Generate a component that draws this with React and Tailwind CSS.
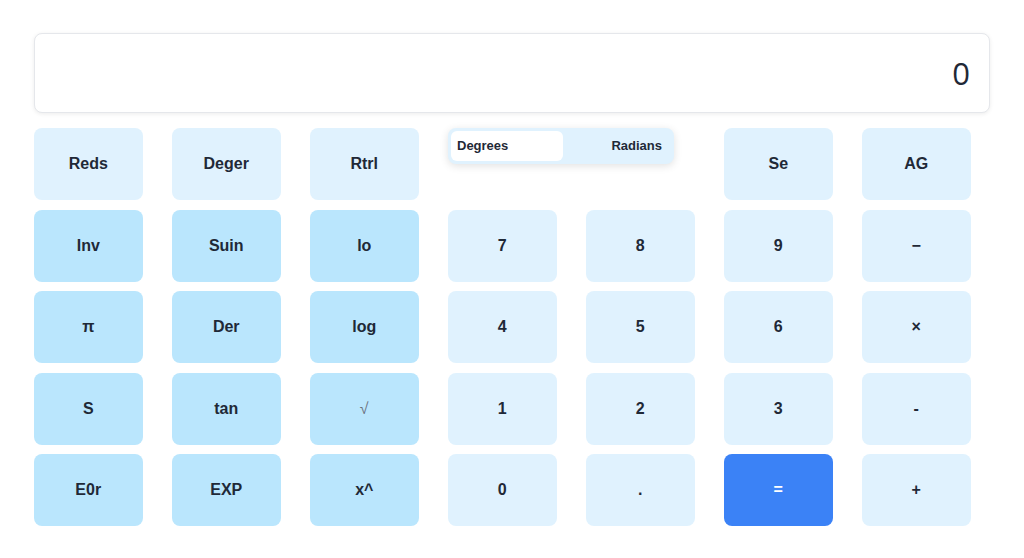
import React from "react";

const light = "bg-[#e0f2fe]";
const dark = "bg-[#bae6fd]";

const rows = [
  [
    { t: "Reds", c: light },
    { t: "Deger", c: light },
    { t: "Rtrl", c: light },
    { toggle: true },
    { t: "Se", c: light },
    { t: "AG", c: light },
  ],
  [
    { t: "Inv", c: dark },
    { t: "Suin", c: dark },
    { t: "lo", c: dark },
    { t: "7", c: light },
    { t: "8", c: light },
    { t: "9", c: light },
    { t: "−", c: light },
  ],
  [
    { t: "π", c: dark },
    { t: "Der", c: dark },
    { t: "log", c: dark },
    { t: "4", c: light },
    { t: "5", c: light },
    { t: "6", c: light },
    { t: "×", c: light },
  ],
  [
    { t: "S", c: dark },
    { t: "tan", c: dark },
    { t: "√", c: dark, thin: true },
    { t: "1", c: light },
    { t: "2", c: light },
    { t: "3", c: light },
    { t: "-", c: light },
  ],
  [
    { t: "E0r", c: dark },
    { t: "EXP", c: dark },
    { t: "x^", c: dark },
    { t: "0", c: light },
    { t: ".", c: light },
    { t: "=", c: "bg-[#3b82f6]", white: true },
    { t: "+", c: light },
  ],
];

function Toggle() {
  return (
    <div className="col-span-2 self-start">
      <div className="w-[226px] h-[36px] rounded-lg bg-[#e0f2fe] shadow-[0_2px_8px_rgba(0,0,0,0.12)] p-[3px] flex items-stretch">
        <div className="w-[112px] rounded-md bg-white flex items-center pl-[6px] text-[13px] font-bold text-[#1f2937]">
          Degrees
        </div>
        <div className="flex-1 flex items-center justify-end pr-[9px] text-[13px] font-bold text-[#1f2937]">
          Radians
        </div>
      </div>
    </div>
  );
}

export default function App() {
  return (
    <div
      className="w-[1024px] h-[558px] bg-white pt-[33px] pl-[34px]"
      style={{ fontFamily: '"Liberation Sans", Arial, sans-serif' }}
    >
      <div className="w-[956px] h-[80px] rounded-lg border border-[#e5e7eb] bg-white shadow-[0_1px_4px_rgba(0,0,0,0.08)] flex items-center justify-end pr-[19px]">
        <span className="text-[31px] text-[#1f2937] font-normal" style={{ fontFamily: '"Open Sans", "Liberation Sans", sans-serif' }}>
          0
        </span>
      </div>
      <div className="mt-[15px] grid grid-cols-[repeat(7,108.5px)] gap-x-[29.5px] gap-y-[9.5px]">
        {rows.flat().map((b, i) =>
          b.toggle ? (
            <Toggle key={i} />
          ) : (
            <button
              key={i}
              className={`h-[72px] rounded-lg ${b.c} flex items-center justify-center text-[16px] ${
                b.thin ? "font-normal text-[#6b7280]" : "font-bold"
              } ${b.white ? "text-white" : b.thin ? "" : "text-[#1f2937]"}`}
            >
              {b.t}
            </button>
          )
        )}
      </div>
    </div>
  );
}
